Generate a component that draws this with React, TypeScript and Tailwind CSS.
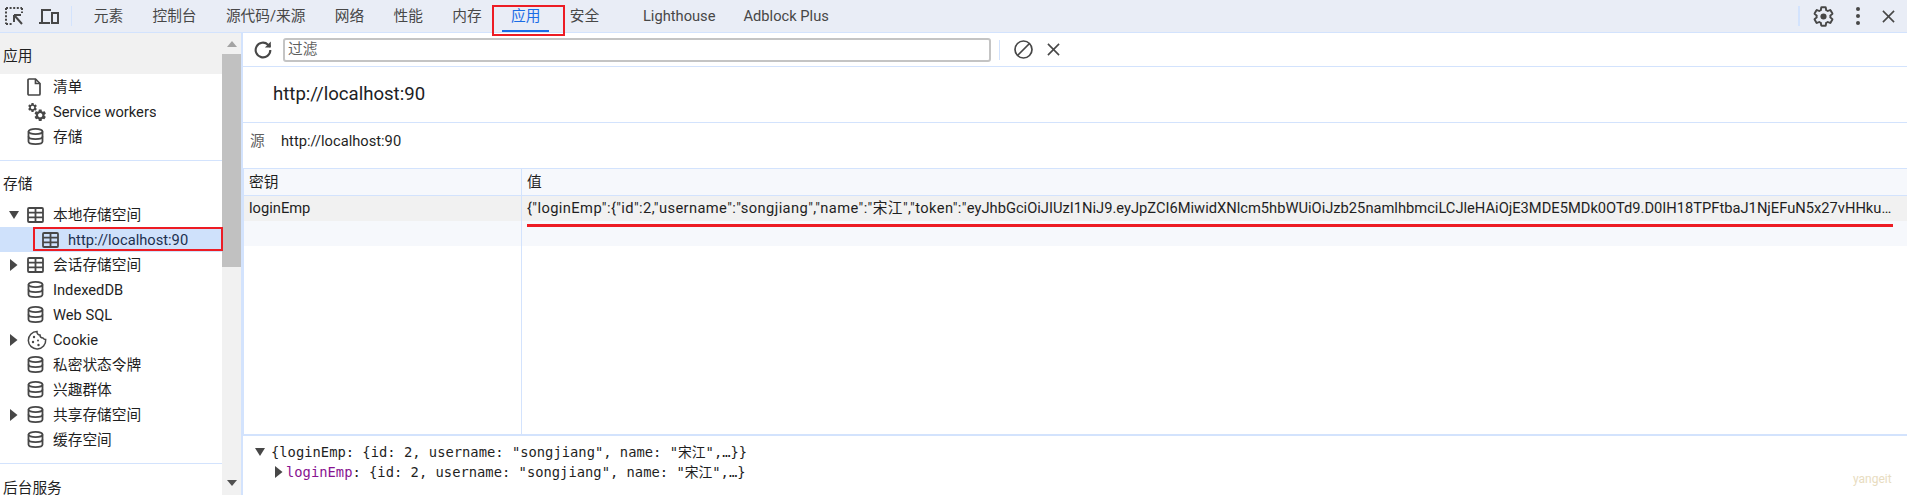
const LINE = "border-[#d3e3fd]";
const ICON = "#474747";
const UI_FONT = "font-['Roboto','Noto_Sans_CJK_SC',sans-serif]";

const tabs = ["元素", "控制台", "源代码/来源", "网络", "性能", "内存", "应用", "安全"];

function InspectIcon() {
  return (
    <svg width="18" height="18" viewBox="0 0 18 18" fill="none" stroke={ICON} strokeWidth="2">
      <path d="M1 1h16M1 1v16M1 17h6M17 1v5" strokeDasharray="2 1.600" />
      <path d="M9 8h7M9 8v7M9.500 8.500l7.500 8.500" />
    </svg>
  );
}

function DeviceIcon() {
  return (
    <svg width="20" height="16" viewBox="0 0 20 16" fill="none" stroke={ICON} strokeWidth="2">
      <path d="M3 14V2h9" />
      <path d="M0 15h11" />
      <rect x="13" y="5" width="6" height="10" />
    </svg>
  );
}

function GearIcon() {
  return (
    <svg width="23" height="23" viewBox="0 0 24 24" fill="none" stroke={ICON} strokeWidth="2">
      <path d="M19.140 12.940c.04-.3.06-.61.06-.94 0-.32-.02-.64-.07-.94l2.030-1.580c.18-.14.23-.41.12-.61l-1.920-3.320c-.12-.22-.37-.29-.59-.22l-2.390.96c-.5-.38-1.030-.7-1.620-.94l-.36-2.540c-.04-.24-.24-.41-.48-.41h-3.840c-.24 0-.43.17-.47.41l-.36 2.540c-.59.24-1.130.57-1.620.94l-2.390-.96c-.22-.08-.47 0-.59.22L2.740 8.870c-.12.21-.08.47.12.61l2.030 1.580c-.05.3-.09.63-.09.94s.02.64.07.94l-2.030 1.580c-.18.14-.23.41-.12.61l1.920 3.320c.12.22.37.29.59.22l2.390-.96c.5.38 1.030.7 1.620.94l.36 2.540c.05.24.24.41.48.41h3.840c.24 0 .44-.17.47-.41l.36-2.540c.59-.24 1.130-.56 1.620-.94l2.390.96c.22.08.47 0 .59-.22l1.920-3.320c.12-.22.07-.47-.12-.61l-2.010-1.580z" />
      <circle cx="12" cy="12" r="3.200" fill={ICON} stroke="none" />
    </svg>
  );
}

function CloseIcon({ size }: { size: number }) {
  return (
    <svg width={size} height={size} viewBox="0 0 14 14" fill="none" stroke={ICON} strokeWidth="1.700">
      <path d="M1 1l12 12M13 1L1 13" />
    </svg>
  );
}

function FileIcon() {
  return (
    <svg width="14" height="18" viewBox="0 0 14 18" fill="none" stroke={ICON} strokeWidth="1.700">
      <path d="M1 2a1 1 0 0 1 1-1h6.500L13 5.500V16a1 1 0 0 1-1 1H2a1 1 0 0 1-1-1z" />
      <path d="M8.500 1v4.500H13" />
    </svg>
  );
}

function GearsIcon() {
  const gear =
    "M19.140 12.940c.04-.3.06-.61.06-.94 0-.32-.02-.64-.07-.94l2.030-1.580c.18-.14.23-.41.12-.61l-1.920-3.320c-.12-.22-.37-.29-.59-.22l-2.390.96c-.5-.38-1.030-.7-1.620-.94l-.36-2.540c-.04-.24-.24-.41-.48-.41h-3.840c-.24 0-.43.17-.47.41l-.36 2.540c-.59.24-1.130.57-1.620.94l-2.390-.96c-.22-.08-.47 0-.59.22L2.740 8.870c-.12.21-.08.47.12.61l2.030 1.580c-.05.3-.09.63-.09.94s.02.64.07.94l-2.030 1.580c-.18.14-.23.41-.12.61l1.920 3.320c.12.22.37.29.59.22l2.390-.96c.5.38 1.030.7 1.620.94l.36 2.540c.05.24.24.41.48.41h3.840c.24 0 .44-.17.47-.41l.36-2.540c.59-.24 1.130-.56 1.620-.94l2.390.96c.22.08.47 0 .59-.22l1.920-3.320c.12-.22.07-.47-.12-.61l-2.010-1.580zM12 15.600c-1.980 0-3.600-1.620-3.600-3.600s1.620-3.600 3.600-3.600 3.600 1.620 3.600 3.600-1.620 3.600-3.600 3.600z";
  return (
    <svg width="20" height="20" viewBox="0 0 20 20" fill={ICON}>
      <path d={gear} transform="scale(0.46)" />
      <path d={gear} transform="translate(6 6) scale(0.6)" />
    </svg>
  );
}

function DbIcon() {
  return (
    <svg width="17" height="17" viewBox="0 0 17 17" fill="none" stroke={ICON} strokeWidth="1.800">
      <ellipse cx="8.500" cy="3.500" rx="7" ry="2.600" />
      <path d="M1.500 3.500v10c0 1.500 3.100 2.600 7 2.600s7-1.100 7-2.600v-10" />
      <path d="M1.500 8.500c0 1.500 3.100 2.600 7 2.600s7-1.100 7-2.600" />
    </svg>
  );
}

function TableIcon() {
  return (
    <svg width="17" height="16" viewBox="0 0 17 16" fill="none" stroke={ICON} strokeWidth="1.800">
      <rect x="1" y="1" width="15" height="14" rx="1" />
      <path d="M1 5.600h15M1 10.300h15M8.500 1v14" />
    </svg>
  );
}

function CookieIcon() {
  return (
    <svg width="20" height="20" viewBox="0 0 20 20" fill="none" stroke={ICON} strokeWidth="1.500">
      <path d="M10 1.500a3 3 0 0 0 3 3.500 3 3 0 0 0 3 3 3 3 0 0 0 2.700 1.500A8.700 8.700 0 1 1 10 1.500z" />
      <circle cx="7" cy="7" r="1.200" fill={ICON} stroke="none" />
      <circle cx="6" cy="12" r="1.200" fill={ICON} stroke="none" />
      <circle cx="11" cy="10.500" r="1" fill={ICON} stroke="none" />
      <circle cx="11.500" cy="15" r="1.200" fill={ICON} stroke="none" />
    </svg>
  );
}

function Arrow({ down }: { down?: boolean }) {
  return down ? (
    <svg width="10" height="8" viewBox="0 0 10 8" fill={ICON}>
      <path d="M0 0h10L5 8z" />
    </svg>
  ) : (
    <svg width="8" height="12" viewBox="0 0 8 12" fill={ICON}>
      <path d="M0 0l7.500 6L0 12z" />
    </svg>
  );
}

function TreeRow({
  icon,
  label,
  arrow,
  selected,
}: {
  icon: React.ReactNode;
  label: string;
  arrow?: "right" | "down";
  selected?: boolean;
}) {
  return (
    <div className={`flex h-[25px] items-center ${selected ? "bg-[#cfe1fb] text-[#1c2f4f]" : ""}`}>
      <div className={`flex shrink-0 items-center justify-center ${selected ? "w-[42px]" : "w-[27px]"}`}>
        {arrow && <Arrow down={arrow === "down"} />}
      </div>
      <div className="flex w-[26px] shrink-0 items-center">{icon}</div>
      <span className="truncate pt-px">{label}</span>
    </div>
  );
}

function Sidebar() {
  return (
    <div className={`flex w-[243px] shrink-0 border-r-2 ${LINE}`}>
      <div className="w-[222px] shrink-0 overflow-hidden">
        <div className="flex h-[41px] items-center bg-[#f1f1f1] pt-[6px] pl-[3px]">应用</div>
        <TreeRow icon={<FileIcon />} label="清单" />
        <TreeRow icon={<GearsIcon />} label="Service workers" />
        <TreeRow icon={<DbIcon />} label="存储" />
        <div className={`mt-[11px] border-t ${LINE}`} />
        <div className="flex h-[41px] items-center pt-[5px] pl-[3px]">存储</div>
        <TreeRow icon={<TableIcon />} label="本地存储空间" arrow="down" />
        <TreeRow icon={<TableIcon />} label="http://localhost:90" selected />
        <TreeRow icon={<TableIcon />} label="会话存储空间" arrow="right" />
        <TreeRow icon={<DbIcon />} label="IndexedDB" />
        <TreeRow icon={<DbIcon />} label="Web SQL" />
        <TreeRow icon={<CookieIcon />} label="Cookie" arrow="right" />
        <TreeRow icon={<DbIcon />} label="私密状态令牌" />
        <TreeRow icon={<DbIcon />} label="兴趣群体" />
        <TreeRow icon={<DbIcon />} label="共享存储空间" arrow="right" />
        <TreeRow icon={<DbIcon />} label="缓存空间" />
        <div className={`mt-[11px] border-t ${LINE}`} />
        <div className="flex h-[48px] items-center pl-[3px]">后台服务</div>
      </div>
      <div className="flex w-[19px] shrink-0 flex-col bg-[#f1f1f1]">
        <div className="flex h-[21px] shrink-0 items-center justify-center">
          <svg width="10" height="6" viewBox="0 0 10 6" fill="#a3a3a3">
            <path d="M5 0l5 6H0z" />
          </svg>
        </div>
        <div className="h-[213px] shrink-0 bg-[#c1c1c1]" />
        <div className="flex-1" />
        <div className="flex h-[17px] shrink-0 items-start justify-center pt-[2px]">
          <svg width="10" height="6" viewBox="0 0 10 6" fill="#505050">
            <path d="M0 0h10L5 6z" />
          </svg>
        </div>
      </div>
    </div>
  );
}

export default function App() {
  return (
    <div className={`relative flex h-[495px] w-[1907px] flex-col overflow-hidden bg-white text-[14.700px] text-[#1f1f1f] ${UI_FONT}`}>
      {/* top tab bar */}
      <div className={`flex h-[33px] shrink-0 items-center border-b ${LINE} bg-[#e9edf6]`}>
        <div className="ml-[5px]">
          <InspectIcon />
        </div>
        <div className="ml-[16px]">
          <DeviceIcon />
        </div>
        <div className="ml-[12px] h-[20px] w-px bg-[#d3e3fd]" />
        <div className="ml-[7px] flex h-full items-stretch text-[#474747]">
          {tabs.map((t) => (
            <div
              key={t}
              className={`relative flex items-center px-[14.700px] ${t === "应用" ? "text-[#1a6ce6]" : ""}`}
            >
              {t}
              {t === "应用" && <div className="absolute right-[6px] bottom-0 left-[6px] h-[2px] bg-[#1a6ce6]" />}
            </div>
          ))}
          <div className="ml-[29px] flex items-center">Lighthouse</div>
          <div className="ml-[28px] flex items-center">Adblock Plus</div>
        </div>
        <div className="flex-1" />
        <div className="h-[20px] w-[2px] bg-[#d3e3fd]" />
        <div className="ml-[12px]">
          <GearIcon />
        </div>
        <div className="ml-[21px] flex flex-col gap-[3px]">
          <div className="h-[4px] w-[4px] rounded-full bg-[#474747]" />
          <div className="h-[4px] w-[4px] rounded-full bg-[#474747]" />
          <div className="h-[4px] w-[4px] rounded-full bg-[#474747]" />
        </div>
        <div className="mr-[12px] ml-[22px]">
          <CloseIcon size={13} />
        </div>
      </div>

      <div className="flex min-h-0 flex-1">
        <Sidebar />
        <div className="flex min-w-0 flex-1 flex-col">
          {/* filter bar */}
          <div className={`flex h-[34px] shrink-0 items-center border-b ${LINE}`}>
            <div className="ml-[9px]">
              <svg width="22" height="22" viewBox="0 0 24 24" fill="none" stroke={ICON} strokeWidth="2.300">
                <path d="M20 12a8 8 0 1 1-2.500-5.800L20 8.500" />
                <path d="M20.500 2.800v6.400h-6.400" fill={ICON} stroke="none" />
              </svg>
            </div>
            <div className="ml-[9px] flex h-[24px] w-[708px] items-center rounded-[3px] border-2 border-[#c4c4c4] pl-[3px] text-[#5f5f5f]">
              过滤
            </div>
            <div className="ml-[8px] h-[20px] w-px bg-[#d3e3fd]" />
            <div className="ml-[14px]">
              <svg width="19" height="19" viewBox="0 0 19 19" fill="none" stroke={ICON} strokeWidth="1.700">
                <circle cx="9.500" cy="9.500" r="8.500" />
                <path d="M3.500 15.500l12-12" />
              </svg>
            </div>
            <div className="ml-[14px]">
              <CloseIcon size={13} />
            </div>
          </div>

          {/* title */}
          <div className={`flex h-[56px] shrink-0 items-center border-b ${LINE} pl-[30px] text-[18.600px] text-[#202124]`}>
            http://localhost:90
          </div>
          <div className={`flex h-[46px] shrink-0 items-center border-b ${LINE} pb-[8px] pl-[7px]`}>
            <span className="w-[31px] text-[#5f5f5f]">源</span>
            <span>http://localhost:90</span>
          </div>

          {/* storage table */}
          <div className={`flex min-h-0 flex-1 flex-col border-l ${LINE}`}>
            <div className={`flex h-[27px] shrink-0 items-center border-b ${LINE} bg-[#f6f8fc]`}>
              <div className={`flex h-full w-[278px] shrink-0 items-center border-r ${LINE} pl-[5px]`}>密钥</div>
              <div className="pl-[5px]">值</div>
            </div>
            <div className="flex h-[25px] shrink-0 items-center bg-[#f1f1f1]">
              <div className={`flex h-full w-[278px] shrink-0 items-center border-r ${LINE} pl-[5px]`}>loginEmp</div>
              <div className="min-w-0 flex-1 truncate pr-[14px] pl-[5px]">
                <span className="tracking-[0.4px]">{'{"loginEmp":{"id":2,"username":"songjiang","name":"宋江","token":"'}</span>
                eyJhbGciOiJIUzI1NiJ9.eyJpZCI6MiwidXNlcm5hbWUiOiJzb25namlhbmciLCJleHAiOjE3MDE5MDk0OTd9.D0IH18TPFtbaJ1NjEFuN5x27vHHkuG8aLq0
              </div>
            </div>
            <div className="flex h-[25px] shrink-0 bg-[#f6f8fc]">
              <div className={`w-[278px] shrink-0 border-r ${LINE}`} />
            </div>
            <div className="flex min-h-0 flex-1">
              <div className={`w-[278px] shrink-0 border-r ${LINE}`} />
            </div>
          </div>

          {/* value preview */}
          <div className={`flex h-[61px] shrink-0 flex-col border-t-2 ${LINE} pt-[6px] font-['DejaVu_Sans_Mono','Noto_Sans_CJK_SC',monospace] text-[13.800px]`}>
            <div className="flex h-[20px] items-center pl-[12px]">
              <span className="w-[16px] shrink-0">
                <Arrow down />
              </span>
              <span>{'{loginEmp: {id: 2, username: "songjiang", name: "宋江",…}}'}</span>
            </div>
            <div className="flex h-[20px] items-center pl-[32px]">
              <span className="flex w-[11px] shrink-0 items-center">
                <Arrow />
              </span>
              <span>
                <span className="text-[#881391]">loginEmp</span>
                {': {id: 2, username: "songjiang", name: "宋江",…}'}
              </span>
            </div>
          </div>
        </div>
      </div>

      {/* red markup drawn over the screenshot, and the watermark */}
      <div className="absolute top-[5px] left-[492px] h-[31px] w-[73px] border-2 border-[#ed1c24]" />
      <div className="absolute top-[227px] left-[33px] h-[24px] w-[190px] border-2 border-[#ed1c24]" />
      <div className="absolute top-[224px] left-[527px] h-[3px] w-[1366px] bg-[#ed1c24]" />
      <div className="absolute top-[470px] left-[1853px] text-[12px] text-[#e8dcc0]">yangeit</div>
    </div>
  );
}
